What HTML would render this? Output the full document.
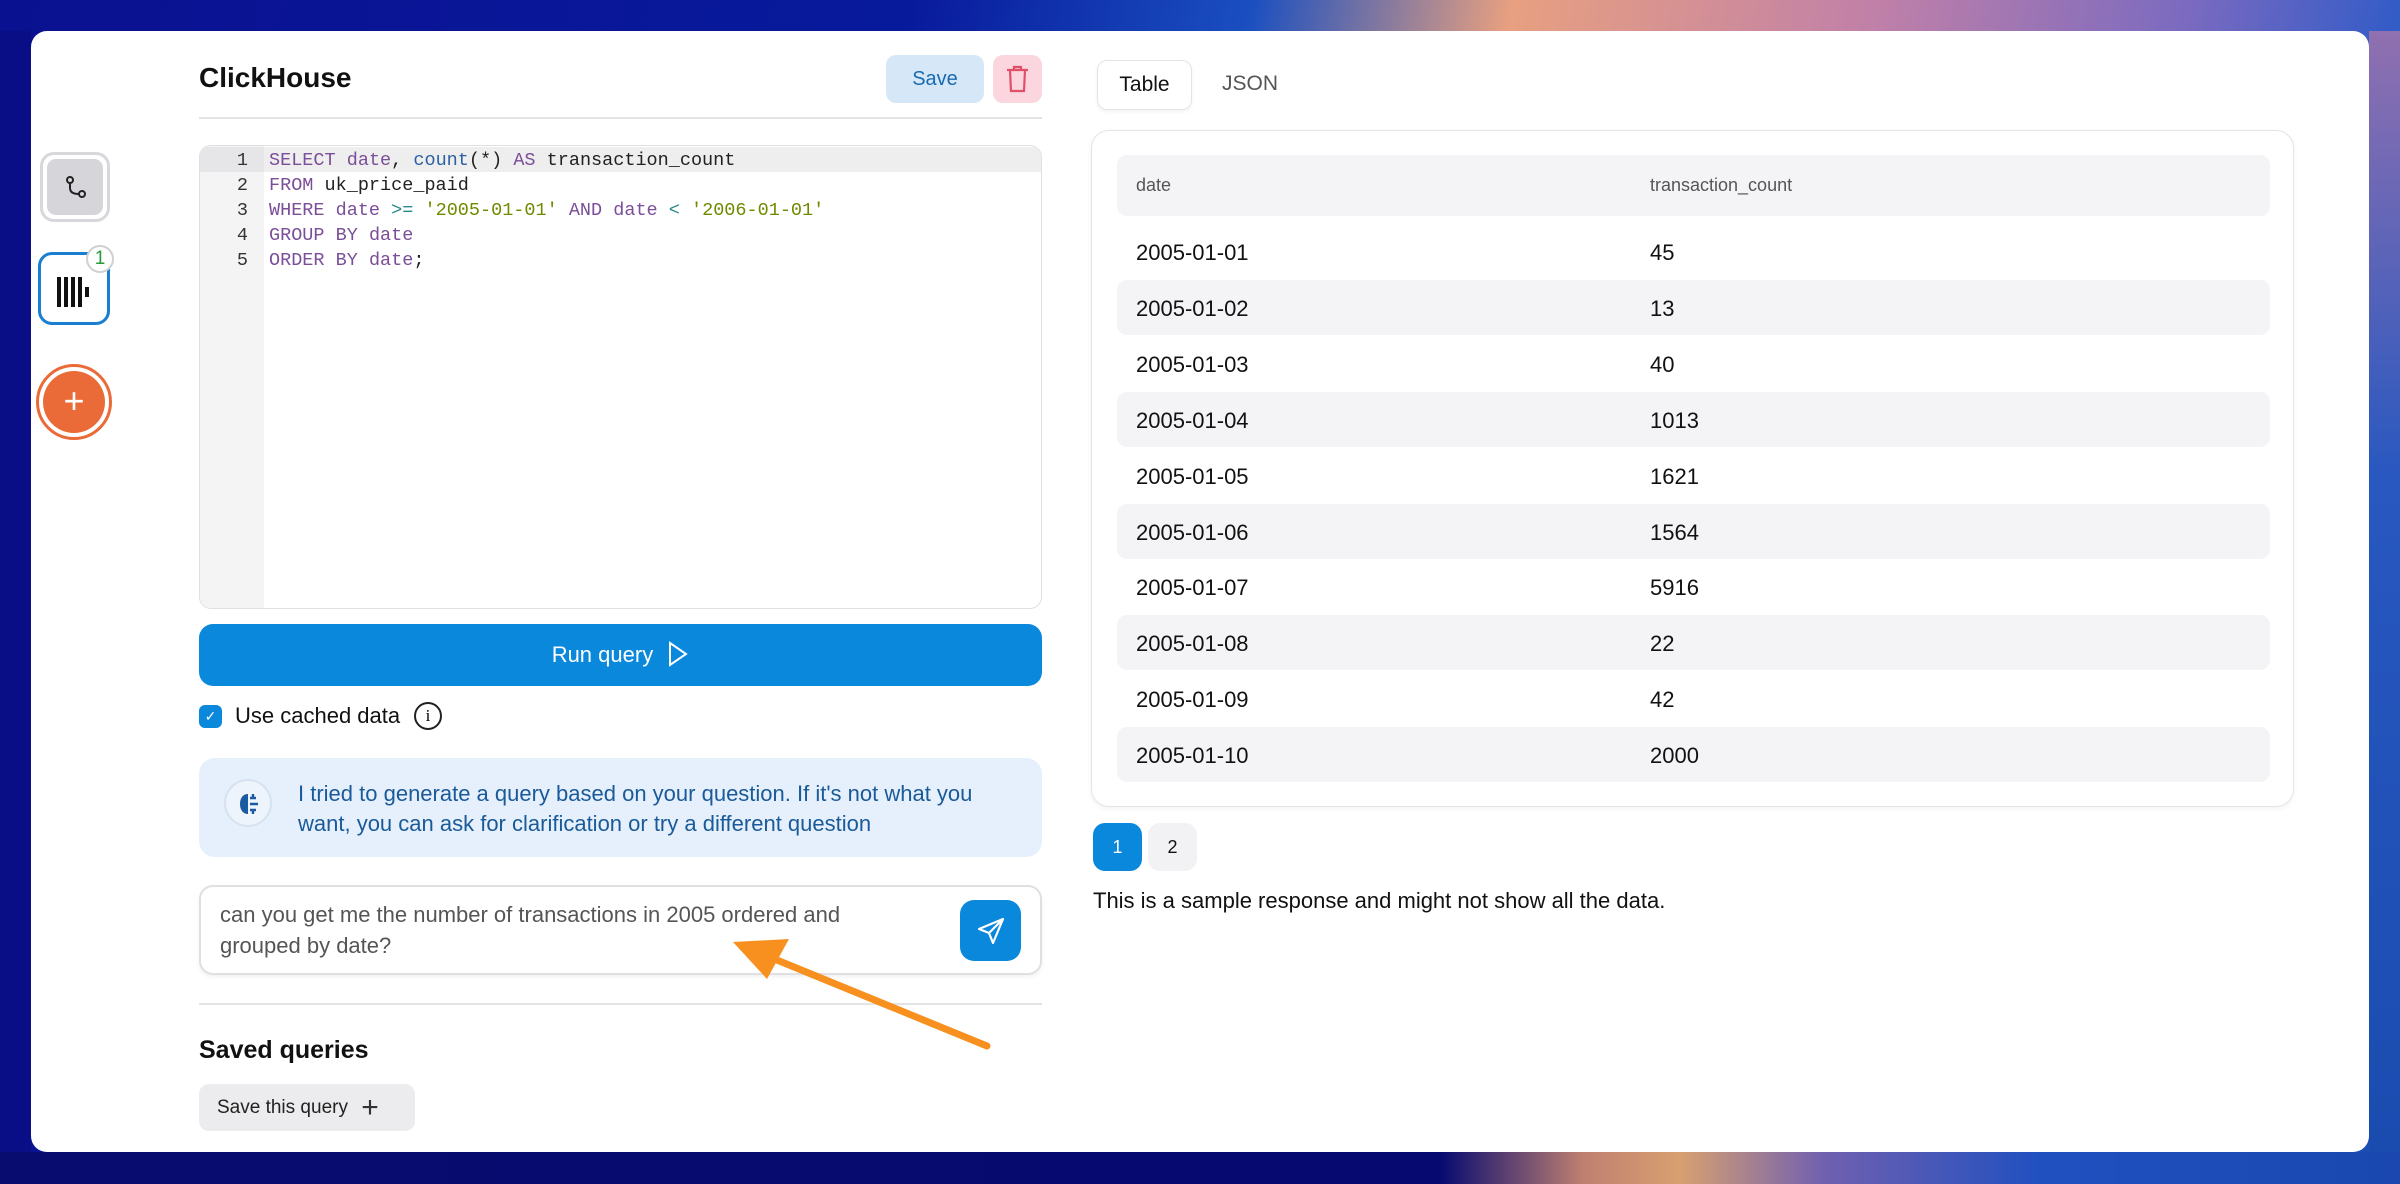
<!DOCTYPE html>
<html><head><meta charset="utf-8"><style>
*{box-sizing:border-box;margin:0;padding:0}
body{width:2400px;height:1184px;overflow:hidden;position:relative;font-family:"Liberation Sans",sans-serif;
background:linear-gradient(100deg,#0a1190 0%,#081a9c 35%,#1a4fc0 48%,#e8a080 58%,#c080a8 72%,#7a6ac0 84%,#2a5ac8 93%,#1848b0 100%);}
.bgb{position:absolute;left:0;top:1152px;width:2400px;height:32px;background:linear-gradient(90deg,#080c6e 0%,#060a70 60%,#c08070 66%,#d8a070 70%,#7060b0 76%,#2050c0 85%,#1a48b0 100%)}
.bgl{position:absolute;left:0;top:31px;width:31px;height:1121px;background:#0a0e86}
.bgr{position:absolute;left:2369px;top:31px;width:31px;height:1121px;background:linear-gradient(180deg,#9070b0,#2858c0 40%,#1a4cb0)}
.card{position:absolute;left:31px;top:31px;width:2338px;height:1121px;background:#fff;border-radius:16px}
.abs{position:absolute}
.code{font-family:"Liberation Mono",monospace;font-size:18.5px;line-height:25px;white-space:pre}
.kw{color:#7a4e98}.fn{color:#2e5fa0}.st{color:#6d8a00}.op{color:#2a8a8a}
.row{position:absolute;left:1117px;width:1153px;height:55px;border-radius:10px;font-size:22px;color:#111}
.row span{position:absolute;top:16px}
.row .a{left:19px}.row .b{left:533px}
.sh{background:#f4f4f6}
</style></head><body>
<div class="bgl"></div><div class="bgr"></div><div class="bgb"></div>
<div class="card"></div>

<div class="abs" style="left:40px;top:152px;width:70px;height:70px;border:3px solid #d8d8dc;border-radius:14px;background:#fff;padding:4px">
 <div style="width:100%;height:100%;background:#d6d6da;border-radius:9px;position:relative">
  <svg class="abs" style="left:16px;top:16px" width="26" height="26" viewBox="0 0 26 26" fill="none" stroke="#222" stroke-width="2"><circle cx="7" cy="5" r="3"/><circle cx="19" cy="19" r="3"/><path d="M7 8v5c0 4 3 6 9 6"/></svg>
 </div></div>
<div class="abs" style="left:38px;top:252px;width:72px;height:73px;border:3px solid #1a7fd0;border-radius:14px;background:#fff">
 <div class="abs" style="left:16px;top:22px;width:4px;height:30px;background:#111"></div>
 <div class="abs" style="left:23px;top:22px;width:4px;height:30px;background:#111"></div>
 <div class="abs" style="left:30px;top:22px;width:4px;height:30px;background:#111"></div>
 <div class="abs" style="left:37px;top:22px;width:4px;height:30px;background:#111"></div>
 <div class="abs" style="left:44px;top:32px;width:4px;height:10px;background:#111"></div>
</div>
<div class="abs" style="left:86px;top:245px;width:28px;height:28px;border-radius:50%;background:#fff;border:2px solid #d0d0d4;color:#2a9a3a;font-size:19px;text-align:center;line-height:24px">1</div>
<div class="abs" style="left:36px;top:364px;width:76px;height:76px;border-radius:50%;background:#fff;border:3px solid #ea6a38;padding:4px">
 <div style="width:100%;height:100%;border-radius:50%;background:#ea6a38;color:#fff;font-size:36px;text-align:center;line-height:60px">+</div></div>

<div class="abs" style="left:199px;top:62px;font-size:28px;font-weight:bold;color:#111">ClickHouse</div>
<div class="abs" style="left:886px;top:55px;width:98px;height:48px;border-radius:10px;background:#d6e8f8;color:#1a6ab0;font-size:20px;text-align:center;line-height:48px">Save</div>
<div class="abs" style="left:993px;top:55px;width:49px;height:48px;border-radius:10px;background:#fbd6de">
 <svg class="abs" style="left:12px;top:10px" width="25" height="28" viewBox="0 0 25 28" fill="none" stroke="#e0506a" stroke-width="2.2"><path d="M2 5h21M9 5V2h7v3M5 5l1 21h13l1-21"/></svg></div>
<div class="abs" style="left:199px;top:117px;width:843px;height:2px;background:#e4e4e6"></div>

<div class="abs" style="left:199px;top:145px;width:843px;height:464px;border:1.5px solid #e0e0e2;border-radius:12px;overflow:hidden;background:#fff">
 <div class="abs" style="left:0;top:0;width:64px;height:100%;background:#f4f4f5"></div>
 <div class="abs" style="left:64px;top:1px;width:780px;height:25px;background:#eeeeef"></div>
 <div class="abs" style="left:0;top:1px;width:64px;height:25px;background:#e6e6e8"></div>
 <div class="abs code" style="left:0;top:2px;width:48px;text-align:right;color:#333">1
2
3
4
5</div>
 <div class="abs code" style="left:69px;top:2px;color:#222"><span class="kw">SELECT</span> <span class="kw">date</span>, <span class="fn">count</span>(*) <span class="kw">AS</span> transaction_count
<span class="kw">FROM</span> uk_price_paid
<span class="kw">WHERE</span> <span class="kw">date</span> <span class="op">&gt;=</span> <span class="st">'2005-01-01'</span> <span class="kw">AND</span> <span class="kw">date</span> <span class="op">&lt;</span> <span class="st">'2006-01-01'</span>
<span class="kw">GROUP BY</span> <span class="kw">date</span>
<span class="kw">ORDER BY</span> <span class="kw">date</span>;</div>
</div>

<div class="abs" style="left:199px;top:624px;width:843px;height:62px;border-radius:14px;background:#0a88dc;color:#fff;font-size:22px;text-align:center;line-height:62px">Run query <svg style="vertical-align:-5px;margin-left:8px" width="22" height="26" viewBox="0 0 22 26" fill="none" stroke="#fff" stroke-width="2"><path d="M3 2l16 11L3 24z"/></svg></div>
<div class="abs" style="left:199px;top:705px;width:23px;height:23px;border-radius:6px;background:#0a88dc;color:#fff;font-size:14px;text-align:center;line-height:23px">✓</div>
<div class="abs" style="left:235px;top:703px;font-size:22px;color:#111">Use cached data</div>
<div class="abs" style="left:414px;top:702px;width:28px;height:28px;border-radius:50%;border:2px solid #222;font-size:17px;text-align:center;line-height:24px;font-family:'Liberation Serif',serif">i</div>

<div class="abs" style="left:199px;top:758px;width:843px;height:99px;border-radius:16px;background:#e6f0fc"></div>
<div class="abs" style="left:224px;top:779px;width:48px;height:48px;border-radius:50%;background:#eef4fc;border:2px solid #d6e2f0">
 <svg class="abs" style="left:10px;top:9px" width="26" height="28" viewBox="0 0 26 28"><path d="M12 4c-5 0-8 4-8 10s3 10 8 10z" fill="#1a5aa0"/><path d="M14 8h6M14 14h8M14 20h6M17 4v4M17 20v4" stroke="#1a5aa0" stroke-width="2.4"/></svg></div>
<div class="abs" style="left:298px;top:779px;width:720px;font-size:22px;line-height:30px;color:#1a5a98">I tried to generate a query based on your question. If it's not what you want, you can ask for clarification or try a different question</div>

<div class="abs" style="left:199px;top:885px;width:843px;height:90px;border:2px solid #e0e0e2;border-radius:14px;background:#fff;box-shadow:0 2px 4px rgba(0,0,0,.06)"></div>
<div class="abs" style="left:220px;top:899px;width:665px;font-size:22px;line-height:31px;color:#555">can you get me the number of transactions in 2005 ordered and grouped by date?</div>
<div class="abs" style="left:960px;top:900px;width:61px;height:61px;border-radius:14px;background:#0a88dc">
 <svg class="abs" style="left:16px;top:16px" width="30" height="30" viewBox="0 0 30 30" fill="none" stroke="#fff" stroke-width="2.2" stroke-linejoin="round"><path d="M27 3L3 13l10 4 4 10z M27 3L13 17"/></svg></div>
<div class="abs" style="left:199px;top:1003px;width:843px;height:2px;background:#e4e4e6"></div>
<div class="abs" style="left:199px;top:1036px;font-size:25px;font-weight:bold;color:#111">Saved queries</div>
<div class="abs" style="left:199px;top:1084px;width:216px;height:47px;border-radius:10px;background:#ececee;font-size:19px;color:#222;line-height:47px;padding-left:18px">Save this query <span style="font-size:30px;vertical-align:-4px;margin-left:8px;color:#333">+</span></div>

<svg class="abs" style="left:0;top:0" width="2400" height="1184"><path d="M987 1046L772 958" stroke="#f7901e" stroke-width="7" stroke-linecap="round"/><path d="M733 942l56-3-22 40z" fill="#f7901e"/></svg>

<div class="abs" style="left:1097px;top:60px;width:95px;height:50px;border:1.5px solid #e4e4e6;border-radius:10px;background:#fff;box-shadow:0 2px 4px rgba(0,0,0,.05);font-size:21px;text-align:center;line-height:48px;color:#111">Table</div>
<div class="abs" style="left:1222px;top:72px;font-size:21px;color:#555">JSON</div>
<div class="abs" style="left:1091px;top:130px;width:1203px;height:677px;border:1.5px solid #e4e4e6;border-radius:18px;background:#fff;box-shadow:0 2px 6px rgba(0,0,0,.05)"></div>
<div class="row sh" style="top:155px;height:61px;font-size:18px;color:#555"><span class="a" style="top:20px">date</span><span class="b" style="top:20px">transaction_count</span></div>
<div class="row" style="top:224px"><span class="a">2005-01-01</span><span class="b">45</span></div>
<div class="row sh" style="top:280px"><span class="a">2005-01-02</span><span class="b">13</span></div>
<div class="row" style="top:336px"><span class="a">2005-01-03</span><span class="b">40</span></div>
<div class="row sh" style="top:392px"><span class="a">2005-01-04</span><span class="b">1013</span></div>
<div class="row" style="top:448px"><span class="a">2005-01-05</span><span class="b">1621</span></div>
<div class="row sh" style="top:504px"><span class="a">2005-01-06</span><span class="b">1564</span></div>
<div class="row" style="top:559px"><span class="a">2005-01-07</span><span class="b">5916</span></div>
<div class="row sh" style="top:615px"><span class="a">2005-01-08</span><span class="b">22</span></div>
<div class="row" style="top:671px"><span class="a">2005-01-09</span><span class="b">42</span></div>
<div class="row sh" style="top:727px"><span class="a">2005-01-10</span><span class="b">2000</span></div>
<div class="abs" style="left:1093px;top:823px;width:49px;height:48px;border-radius:12px;background:#0a88dc;color:#fff;font-size:18px;text-align:center;line-height:48px">1</div>
<div class="abs" style="left:1148px;top:823px;width:49px;height:48px;border-radius:12px;background:#f2f2f4;color:#111;font-size:18px;text-align:center;line-height:48px">2</div>
<div class="abs" style="left:1093px;top:888px;font-size:22px;color:#111">This is a sample response and might not show all the data.</div>
</body></html>
